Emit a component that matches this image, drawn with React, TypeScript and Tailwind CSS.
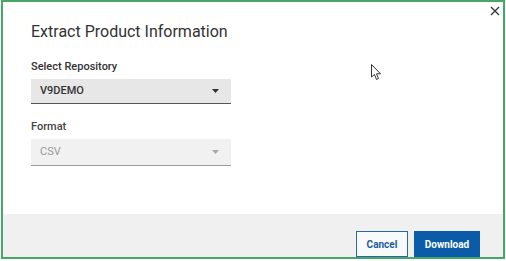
import React from 'react';

function Caret({ className }: { className?: string }) {
  return (
    <svg width="7" height="4" viewBox="0 0 7 4" className={className}>
      <path d="M0 0 L7 0 L3.5 4 Z" fill="currentColor" />
    </svg>
  );
}

export default function App() {
  return (
    <div className="h-[261px] w-[506px] bg-white pl-px font-['Roboto',sans-serif]">
      <div className="relative flex h-[259px] w-[504px] flex-col border-2 border-[#46a866] bg-white">
        <button className="absolute right-[3px] top-[4px] text-[#333]">
          <svg width="10" height="10" viewBox="0 0 10 10">
            <path d="M1 1 L9 9 M9 1 L1 9" stroke="currentColor" strokeWidth="1.3" />
          </svg>
        </button>

        {/* mouse pointer captured in the screenshot */}
        <svg width="12" height="17" viewBox="0 0 12 17" className="absolute left-[368px] top-[62px]">
          <path d="M0.5 0.5 L0.5 13 L3.5 10.5 L5.5 15.5 L7.5 14.5 L5.5 9.8 L9.5 9.8 Z" fill="white" stroke="#333" strokeWidth="1" />
        </svg>

        <div className="flex-1 px-[28px] pt-[19px]">
          <h1 className="text-[16px] leading-[22px] text-[#333]">Extract Product Information</h1>

          <div className="mt-[17px] text-[11px] font-medium leading-[14px] text-[#333]">Select Repository</div>
          <div className="mt-[5px] flex h-[25px] w-[200px] items-center justify-between border-b-[1.5px] border-[#555] bg-[#e7e7e7] pl-[9px] pr-[12px]">
            <span className="text-[11px] font-medium text-[#333]">V9DEMO</span>
            <Caret className="text-[#333]" />
          </div>

          <div className="mt-[16px] text-[11px] font-medium leading-[14px] text-[#444]">Format</div>
          <div className="mt-[5px] flex h-[27px] w-[200px] items-center justify-between border-b border-[#999] bg-[#f1f1f1] pl-[9px] pr-[12px]">
            <span className="text-[11px] text-[#9a9a9a]">CSV</span>
            <Caret className="text-[#aaa]" />
          </div>
        </div>

        <div className="flex h-[43px] items-end justify-end gap-[6px] bg-[#f0f0f0] pr-[23px]">
          <button className="h-[26px] w-[52px] border border-[#2b66a8] bg-[#f7f9fb] text-[10px] font-bold text-[#1f5d9e]">
            Cancel
          </button>
          <button className="h-[26px] w-[66px] bg-[#0b5ca8] text-[10px] font-bold text-white">Download</button>
        </div>
      </div>
    </div>
  );
}
